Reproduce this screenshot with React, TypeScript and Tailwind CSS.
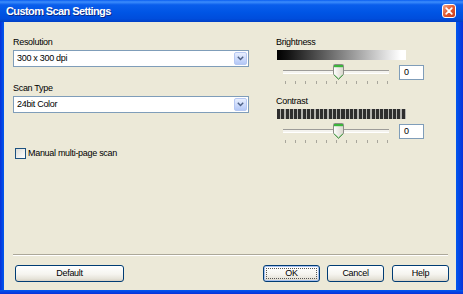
const txt = "text-[9px] leading-[11px] tracking-[-0.3px] text-black";

function Label({ children, className = "" }: { children: string; className?: string }) {
  return <div className={`${txt} ${className}`}>{children}</div>;
}

function Select({ value }: { value: string }) {
  return (
    <div className="flex h-[17px] w-[236px] items-center border border-[#7f9db9] bg-white pl-[3px] pr-px">
      <span className={`flex-1 ${txt}`}>{value}</span>
      <div className="flex h-[13px] w-[13px] items-center justify-center rounded-[2px] border border-[#b6c8f3] bg-[linear-gradient(180deg,#e8effd,#c9d8fb_60%,#b4c8f6)]">
        <svg width="7" height="5" viewBox="0 0 7 5">
          <path d="M0.8 0.8 L3.5 3.6 L6.2 0.8" fill="none" stroke="#4d6185" strokeWidth="1.4" />
        </svg>
      </div>
    </div>
  );
}

function Thumb() {
  return (
    <svg width="11" height="16" viewBox="0 0 11 16" className="absolute left-[56px] top-0">
      <defs>
        <linearGradient id="thumbFill" x1="0" x2="1" y1="0" y2="0">
          <stop offset="0" stopColor="#ffffff" />
          <stop offset="1" stopColor="#d9d6cc" />
        </linearGradient>
      </defs>
      <path
        d="M1.5 0.5 H9.5 Q10.5 0.5 10.5 1.5 V10.5 L5.5 15.5 L0.5 10.5 V1.5 Q0.5 0.5 1.5 0.5 Z"
        fill="url(#thumbFill)"
        stroke="#8c8d86"
      />
      <rect x="1" y="1" width="9" height="2.2" fill="#3cb43c" />
      <path d="M1.2 10.9 L5.5 15 L9.8 10.9" fill="none" stroke="#3aa83a" strokeWidth="1" />
    </svg>
  );
}

function Slider({ value }: { value: string }) {
  const ticks = Array.from({ length: 11 });
  return (
    <div className="flex flex-col">
      <div className="flex h-[16px] items-center">
        <div className="relative h-[16px] w-[118px]">
          <div className="absolute left-[6px] right-[6px] top-[6px] h-[4px] border-b border-t border-b-white border-t-[#9d9c99] bg-[#f4f3ee]" />
          <Thumb />
        </div>
        <div className={`ml-[4px] flex h-[15px] w-[25px] items-center border border-[#7f9db9] bg-white pl-[4px] ${txt}`}>
          {value}
        </div>
      </div>
      <div className="ml-[8px] mt-px flex h-[3px] w-[103px] justify-between">
        {ticks.map((_, i) => (
          <span key={i} className="h-[3px] w-px bg-[#a8a69c]" />
        ))}
      </div>
    </div>
  );
}

function Button({ label, width, primary = false, className = "" }: { label: string; width: string; primary?: boolean; className?: string }) {
  return (
    <button
      className={`relative flex h-[17px] items-center justify-center rounded-[3px] border border-[#003c74] bg-[linear-gradient(180deg,#ffffff,#f5f4ef_55%,#e6e3d9_85%,#d6d0c5)] ${txt} ${width} ${
        primary ? "shadow-[inset_0_0_0_1px_#a6c0ef]" : ""
      } ${className}`}
    >
      {primary && <span className="absolute inset-[2px] border border-dotted border-[#555]" />}
      {label}
    </button>
  );
}

export default function App() {
  return (
    <div className="flex h-[294px] w-[463px] flex-col font-['Liberation_Sans',Arial,sans-serif]">
      <div className="flex h-[22px] items-center justify-between bg-[linear-gradient(180deg,#0a5ef0_0%,#3d8dfc_9%,#0a5eec_22%,#0055e5_55%,#004ddc_85%,#003fc6_100%)] pl-[6px] pr-[7px]">
        <span className="text-[11px] font-bold tracking-[-0.6px] text-white [text-shadow:1px_1px_0_#0a2a88]">
          Custom Scan Settings
        </span>
        <div className="flex h-[14px] w-[14px] items-center justify-center rounded-[3px] border border-white bg-[linear-gradient(135deg,#f3a585,#e35a30_50%,#c83c1c)]">
          <svg width="8" height="8" viewBox="0 0 8 8">
            <path d="M1.2 1.2 L6.8 6.8 M6.8 1.2 L1.2 6.8" stroke="white" strokeWidth="1.7" strokeLinecap="round" />
          </svg>
        </div>
      </div>

      <div className="flex flex-1">
        <div className="w-[4px] bg-[linear-gradient(90deg,#0831d9,#0058ee)]" />
        <div className="flex flex-1 flex-col bg-[#ece9d8]">
          <div className="flex pt-[15px]">
            <div className="ml-[9px] flex w-[236px] flex-col">
              <Label className="mb-[2px]">Resolution</Label>
              <Select value="300 x 300 dpi" />
              <Label className="mb-[2px] mt-[16px]">Scan Type</Label>
              <Select value="24bit Color" />
              <div className="ml-[2px] mt-[35px] flex items-center">
                <div className="h-[11px] w-[11px] border border-[#1c5180] bg-[linear-gradient(135deg,#dcdcd7,#ffffff)]" />
                <span className={`ml-[2px] ${txt}`}>Manual multi-page scan</span>
              </div>
            </div>

            <div className="ml-[28px] flex flex-col">
              <Label className="-ml-px">Brightness</Label>
              <div className="mt-[2px] h-[10px] w-[129px] bg-[linear-gradient(90deg,#000_0%,#111_8%,#fff_96%)]" />
              <div className="mt-[4px]">
                <Slider value="0" />
              </div>
              <Label className="-ml-px mt-[12px]">Contrast</Label>
              <div className="mt-[2px] h-[10px] w-[129px] bg-[repeating-linear-gradient(90deg,#2e2e2e_0px,#2e2e2e_3px,#b4b4b0_3px,#b4b4b0_4.3px)]" />
              <div className="mt-[4px]">
                <Slider value="0" />
              </div>
            </div>
          </div>

          <div className="ml-[9px] mr-[8px] mt-auto h-[2px] border-b border-t border-b-white border-t-[#aca899]" />
          <div className="mb-[8px] mt-[9px] flex h-[17px] pl-[11px] pr-[7px]">
            <Button label="Default" width="w-[109px]" />
            <Button label="OK" width="w-[57px]" primary className="ml-auto" />
            <Button label="Cancel" width="w-[57px]" className="ml-[7px]" />
            <Button label="Help" width="w-[57px]" className="ml-[8px]" />
          </div>
        </div>
        <div className="w-[7px] bg-[linear-gradient(270deg,#0831d9,#0058ee)]" />
      </div>
      <div className="h-[4px] bg-[linear-gradient(0deg,#0831d9,#0058ee)]" />
    </div>
  );
}
